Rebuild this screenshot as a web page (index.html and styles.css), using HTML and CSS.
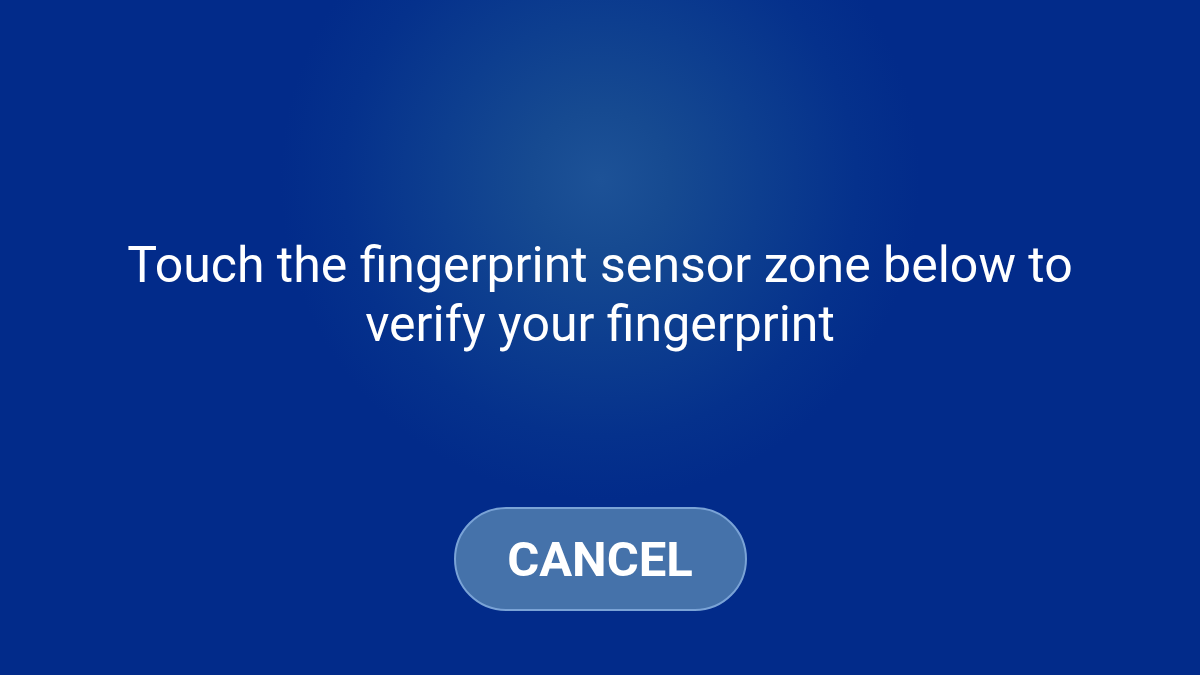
FILE: index.html
```html
<!DOCTYPE html>
<html>
<head>
<meta charset="utf-8">
<link rel="stylesheet" href="styles.css">
</head>
<body>
<main class="screen">
  <p class="message">Touch the fingerprint sensor zone below to<br>verify your fingerprint</p>
  <button class="cancel">CANCEL</button>
</main>
</body>
</html>
```
FILE: styles.css
```css
html, body {
  margin: 0;
  padding: 0;
  width: 1200px;
  height: 675px;
  overflow: hidden;
}
.screen {
  width: 1200px;
  height: 675px;
  box-sizing: border-box;
  background: radial-gradient(circle 320px at 600px 180px, #1d5297 0%, #164a91 22%, #0d3e8f 50%, #05318c 80%, #022b8a 100%);
  background-color: #022b8a;
  display: flex;
  flex-direction: column;
  align-items: center;
  font-family: Roboto, "Liberation Sans", sans-serif;
  color: #ffffff;
}
.message {
  margin: 236px 0 0 0;
  font-size: 50px;
  line-height: 59px;
  text-align: center;
  font-weight: 400;
  white-space: nowrap;
}
.cancel {
  margin-top: 153px;
  width: 293px;
  height: 104px;
  border-radius: 52px;
  border: 2px solid #7aa3d6;
  background: #4572aa;
  color: #ffffff;
  font-family: Roboto, "Liberation Sans", sans-serif;
  font-size: 49px;
  font-weight: 700;
  padding: 0;
}
```
